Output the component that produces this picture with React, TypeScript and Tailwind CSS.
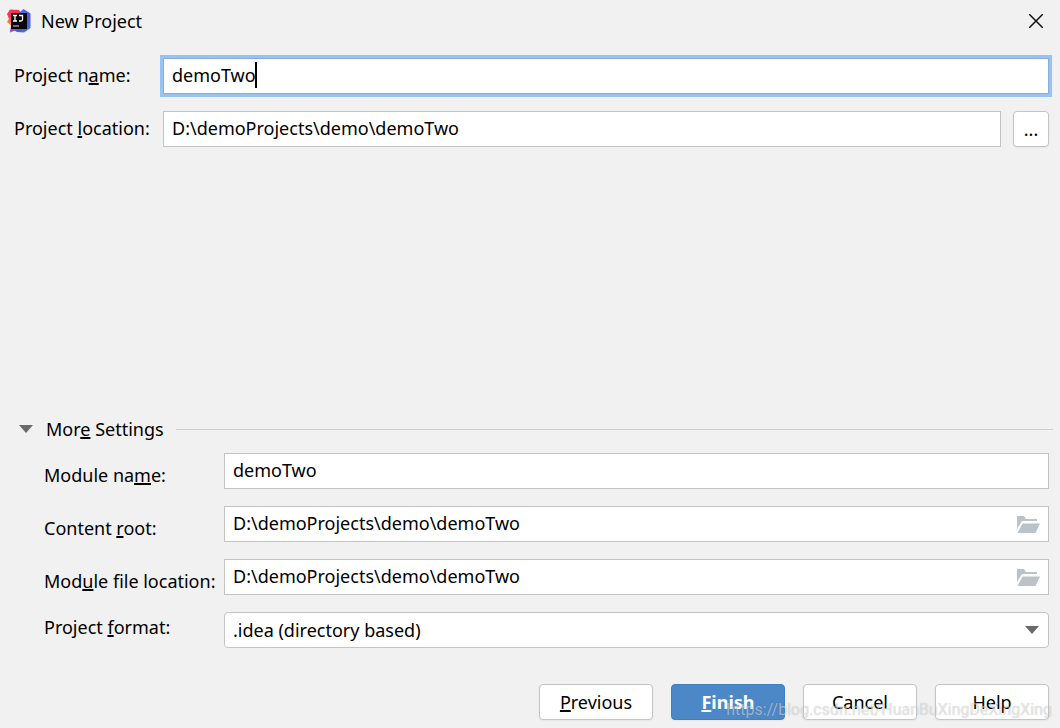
import React, { useState } from 'react';

interface MnemonicProps {
  text: string;
  at: number;
}

// Label text with its keyboard shortcut letter underlined
const Mnemonic: React.FC<MnemonicProps> = ({ text, at }) => (
  <>
    {text.slice(0, at)}
    <span className="underline decoration-2 underline-offset-1">{text[at]}</span>
    {text.slice(at + 1)}
  </>
);

const Logo = () => (
  <svg viewBox="0 0 24 24" className="w-6 h-6" aria-hidden="true">
    <defs>
      <linearGradient id="warm" x1="0" y1="0" x2="0" y2="1">
        <stop offset="0" stopColor="#ff2d55" />
        <stop offset="0.35" stopColor="#fb3a5d" />
        <stop offset="0.6" stopColor="#f98b28" />
        <stop offset="0.8" stopColor="#b04bc4" />
        <stop offset="1" stopColor="#9b3fd0" />
      </linearGradient>
      <linearGradient id="cool" x1="0" y1="0" x2="1" y2="1">
        <stop offset="0" stopColor="#2e7cf0" />
        <stop offset="0.6" stopColor="#5358d8" />
        <stop offset="1" stopColor="#347bf0" />
      </linearGradient>
    </defs>
    <path d="M3 0.5 12 1l3 4v14l-9 1-3 3.5 1-7L0 13l2-3-2-5z" fill="url(#warm)" />
    <path d="M12 4 16.500 0 23.500 4.500 23.500 19 17 23.500 10 23 5 20z" fill="url(#cool)" />
    <path d="M3 23.500 4.500 17 14 19z" fill="#a244cc" />
    <rect x="4" y="4" width="16" height="16" fill="#080608" />
    <path d="M6 6.500h4M8 6.500v5.500M6 12h4M12 6.500h3.500v4q0 1.500-1.500 1.500h-2" fill="none" stroke="#fff" strokeWidth="1.300" />
    <path d="M6 17h6" stroke="#ddd" strokeWidth="1" />
  </svg>
);

const FolderIcon = () => (
  <svg viewBox="0 0 23 17" className="w-[23px] h-[17px]" aria-hidden="true">
    <path d="M0 0h7l2 3h11v2H5L0 13z" fill="#bcc3c8" />
    <path d="M5.500 7.500H23L18.500 17H0.500z" fill="#bcc3c8" />
  </svg>
);

const ArrowDown = () => (
  <svg viewBox="0 0 14 8" className="w-3.5 h-2" aria-hidden="true">
    <path d="M0 0h14L7 8z" fill="#6a6a6a" />
  </svg>
);

const FIELD = 'w-full h-9 px-2 pb-0.5 bg-white border border-[#c4c4c4] outline-none';
const BUTTON = 'w-[114px] h-9 rounded border border-[#c4c4c4] bg-white shadow-xs';

const SETTINGS = [
  { id: 'module-name', label: 'Module name:', at: 9, value: 'demoTwo', browse: false },
  { id: 'content-root', label: 'Content root:', at: 8, value: 'D:\\demoProjects\\demo\\demoTwo', browse: true },
  { id: 'module-file', label: 'Module file location:', at: 3, value: 'D:\\demoProjects\\demo\\demoTwo', browse: true },
];

const App: React.FC = () => {
  const [name, setName] = useState('demoTwo');
  const [open, setOpen] = useState(true);

  return (
    <div className="relative min-h-screen flex flex-col bg-[#f1f1f1] text-black text-[18px] leading-6 font-['Noto_Sans',sans-serif]">
      {/* Title bar */}
      <header className="flex items-center h-[42px] pl-[7px] pr-[15px]">
        <Logo />
        <h1 className="ml-2.5 flex-1">New Project</h1>
        <button aria-label="Close" className="p-0.5">
          <svg viewBox="0 0 14 14" className="w-3.5 h-3.5" aria-hidden="true">
            <path d="M0 0 14 14M14 0 0 14" stroke="#111" strokeWidth="1.500" />
          </svg>
        </button>
      </header>

      {/* Project name and location */}
      <div className="grid grid-cols-[149px_1fr] items-center gap-y-[17px] pt-4 pl-3.5 pr-[11px]">
        <label htmlFor="project-name" className="pb-0.5"><Mnemonic text="Project name:" at={9} /></label>
        <div className="relative">
          <input
            id="project-name"
            value={name}
            onChange={(e) => setName(e.target.value)}
            className="block w-full h-9 px-2 pb-0.5 bg-white border border-[#87afda] outline-none ring-3 ring-[#97c3f3]"
          />
          {name === 'demoTwo' && <span className="absolute left-[92px] top-1 w-0.5 h-[26px] bg-black" />}
        </div>

        <label htmlFor="project-location" className="pb-0.5"><Mnemonic text="Project location:" at={8} /></label>
        <div className="flex gap-3">
          <input id="project-location" defaultValue="D:\demoProjects\demo\demoTwo" className={FIELD} />
          <button className="w-9 h-9 shrink-0 rounded border border-[#c4c4c4] bg-white shadow-xs" aria-label="Browse">...</button>
        </div>
      </div>

      <div className="flex-1" />

      {/* More settings */}
      <section>
        <div className="flex items-center pl-[19px] pr-[7px]">
          <button onClick={() => setOpen(!open)} aria-expanded={open} className="flex items-center gap-[13px]">
            <ArrowDown />
            <span><Mnemonic text="More Settings" at={3} /></span>
          </button>
          <div className="ml-3 flex-1 border-t border-[#d0d0d0]" />
        </div>

        {open && (
          <div className="grid grid-cols-[180px_1fr] items-center gap-y-[17px] pt-3 pl-11 pr-[11px]">
            {SETTINGS.map((s) => (
              <React.Fragment key={s.id}>
                <label htmlFor={s.id} className="pt-2 whitespace-nowrap"><Mnemonic text={s.label} at={s.at} /></label>
                <div className="relative">
                  <input id={s.id} defaultValue={s.value} className={`block ${FIELD}`} />
                  {s.browse && (
                    <button aria-label="Choose folder" className="absolute right-[9px] top-2.5">
                      <FolderIcon />
                    </button>
                  )}
                </div>
              </React.Fragment>
            ))}
            <label htmlFor="format" className="pb-1.5"><Mnemonic text="Project format:" at={8} /></label>
            <div className="relative">
              <select id="format" className="block appearance-none w-full h-9 px-2 rounded bg-white border border-[#c4c4c4] outline-none">
                <option>.idea (directory based)</option>
                <option>.ipr (file based)</option>
              </select>
              <span className="absolute right-2.5 top-3.5 pointer-events-none"><ArrowDown /></span>
            </div>
          </div>
        )}
      </section>

      {/* Dialog buttons */}
      <footer className="flex justify-end gap-[18px] pt-9 pb-2 pr-[11px]">
        <button className={BUTTON}><Mnemonic text="Previous" at={0} /></button>
        <button className="w-[114px] h-9 rounded border border-[#417fc0] bg-[#4c87c8] text-white font-bold shadow-xs">
          <Mnemonic text="Finish" at={0} />
        </button>
        <button className={BUTTON}>Cancel</button>
        <button className={BUTTON}>Help</button>
      </footer>

      <div className="absolute right-2 bottom-2 text-base leading-5 text-white/50 [text-shadow:0_0_1px_rgba(0,0,0,0.25)] font-[Roboto,sans-serif] pointer-events-none">
        https://blog.csdn.net/HuanBuXingDeXingXing
      </div>
    </div>
  );
};

export default App;
